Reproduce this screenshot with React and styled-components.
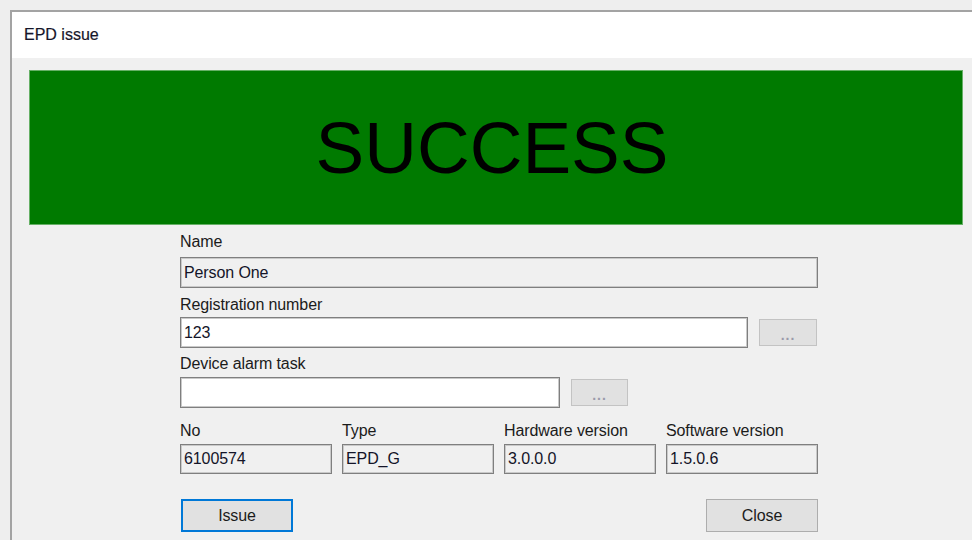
import React from 'react';
import styled, { createGlobalStyle } from 'styled-components';

const GlobalStyle = createGlobalStyle`
  html, body {
    margin: 0;
    padding: 0;
    background: #eeeeee;
    overflow: hidden;
  }
  body {
    font-family: "Liberation Sans", Arial, sans-serif;
    color: #1b1b1b;
  }
`;

const Window = styled.div`
  margin: 10px 0 0 10px;
  width: 962px;
  height: 530px;
  border-top: 2px solid #a3a3a3;
  border-left: 2px solid #a3a3a3;
  box-sizing: border-box;
  background: #f0f0f0;
  display: flex;
  flex-direction: column;
`;

const TitleBar = styled.div`
  height: 46px;
  background: #ffffff;
  display: flex;
  align-items: center;
  padding-left: 12px;
  font-size: 16px;
  color: #16162a;
  -webkit-text-stroke: 0.2px #16162a;
`;

const Body = styled.div`
  flex: 1;
  padding: 13px 0 0 18px;
`;

const Banner = styled.div`
  box-sizing: border-box;
  width: 932px;
  height: 153px;
  padding-right: 8px;
  background: #007a00;
  box-shadow: 0 0 0 1px #66b066;
  display: flex;
  align-items: center;
  justify-content: center;
  font-size: 73px;
  color: #000;
`;

const Form = styled.div`
  margin-left: 150px;
  width: 638px;
  display: flex;
  flex-direction: column;
`;

const Label = styled.div`
  height: 20px;
  line-height: 20px;
  font-size: 16px;
  letter-spacing: -0.1px;
  margin-top: ${p => p.$top || 0}px;
  white-space: nowrap;
`;

const Field = styled.div`
  box-sizing: border-box;
  width: ${p => (p.$width ? `${p.$width}px` : '100%')};
  height: ${p => p.$height || 31}px;
  margin-top: ${p => p.$top || 0}px;
  border: 1px solid #7f7f7f;
  box-shadow: inset 0 0 0 1px #c9c9c9;
  background: ${p => (p.$readOnly ? '#f0f0f0' : '#ffffff')};
  padding: 0 3px;
  display: flex;
  align-items: center;
  font-size: 16px;
  letter-spacing: -0.1px;
  color: #141428;
`;

const Row = styled.div`
  display: flex;
  align-items: center;
  gap: 11px;
  margin-top: ${p => p.$top || 0}px;
`;

const BrowseButton = styled.div`
  box-sizing: border-box;
  width: ${p => p.$width}px;
  height: 27px;
  background: #e1e1e1;
  border: 1px solid #c3c3c3;
  display: flex;
  align-items: flex-end;
  justify-content: center;
  padding-bottom: 2px;
  font-size: 14px;
  font-weight: bold;
  color: #9a9aaa;
  letter-spacing: 1px;
`;

const VersionGrid = styled.div`
  display: grid;
  grid-template-columns: repeat(4, 152px);
  column-gap: 10px;
  margin-top: 13px;
`;

const Cell = styled.div`
  display: flex;
  flex-direction: column;
`;

const ButtonBar = styled.div`
  display: flex;
  justify-content: space-between;
  margin-top: 25px;
  padding-left: 1px;
`;

const Button = styled.div`
  box-sizing: border-box;
  width: 112px;
  height: 33px;
  background: #e1e1e1;
  border: ${p => (p.$primary ? '2px solid #0078d7' : '1px solid #adadad')};
  display: flex;
  align-items: center;
  justify-content: center;
  font-size: 16px;
  letter-spacing: -0.1px;
  color: #1b1b1b;
`;

const versions = [
  { label: 'No', value: '6100574' },
  { label: 'Type', value: 'EPD_G' },
  { label: 'Hardware version', value: '3.0.0.0' },
  { label: 'Software version', value: '1.5.0.6' },
];

export default function App() {
  return (
    <>
      <GlobalStyle />
      <Window>
        <TitleBar>EPD issue</TitleBar>
        <Body>
          <Banner>SUCCESS</Banner>
          <Form>
            <Label $top={8}>Name</Label>
            <Field $readOnly $top={5}>Person One</Field>

            <Label $top={7}>Registration number</Label>
            <Row $top={2}>
              <Field $width={568}>123</Field>
              <BrowseButton $width={58}>...</BrowseButton>
            </Row>

            <Label $top={6}>Device alarm task</Label>
            <Row $top={3}>
              <Field $width={380} />
              <BrowseButton $width={57}>...</BrowseButton>
            </Row>

            <VersionGrid>
              {versions.map(v => (
                <Cell key={v.label}>
                  <Label>{v.label}</Label>
                  <Field $readOnly $height={30} $top={3}>{v.value}</Field>
                </Cell>
              ))}
            </VersionGrid>

            <ButtonBar>
              <Button $primary>Issue</Button>
              <Button>Close</Button>
            </ButtonBar>
          </Form>
        </Body>
      </Window>
    </>
  );
}
